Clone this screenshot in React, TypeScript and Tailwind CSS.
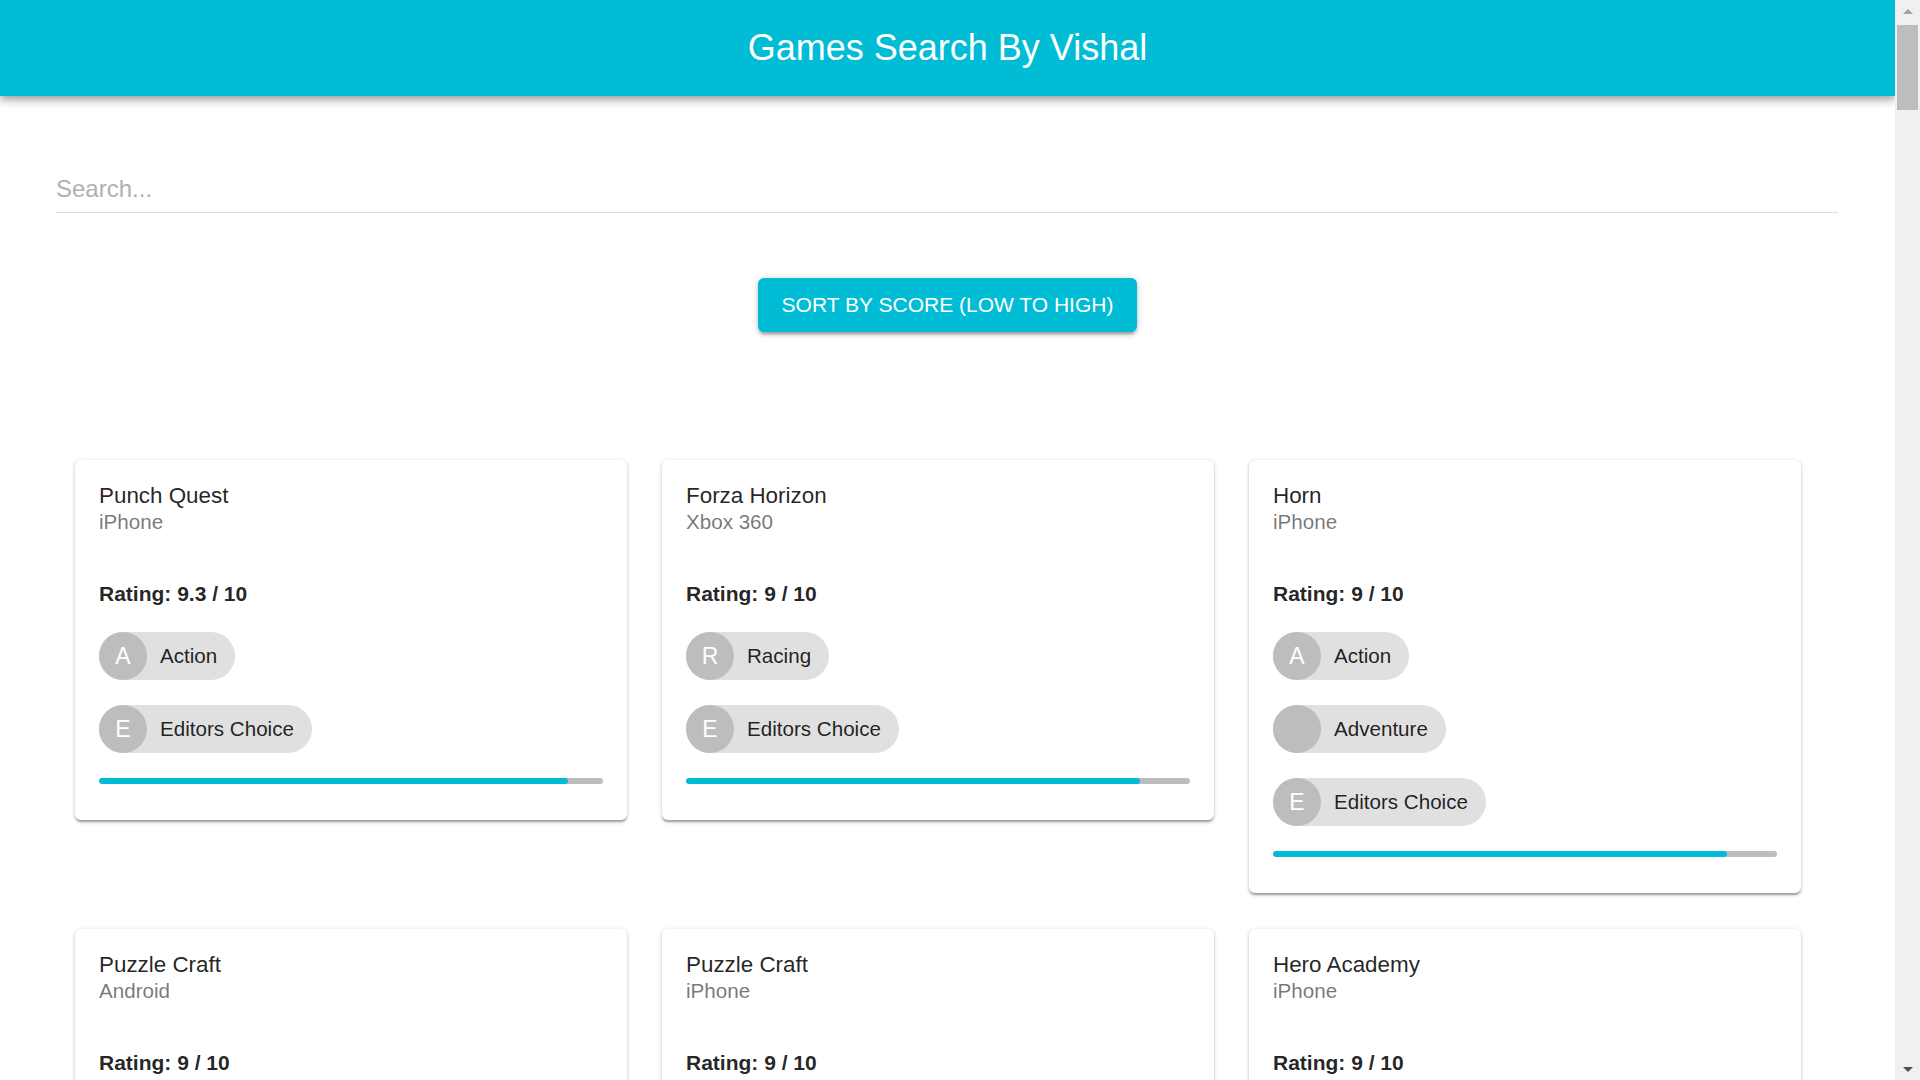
import React from "react";

type Game = {
  title: string;
  platform: string;
  score: number;
  genres: { letter: string; label: string }[];
};

const games: Game[] = [
  {
    title: "Punch Quest",
    platform: "iPhone",
    score: 9.3,
    genres: [
      { letter: "A", label: "Action" },
      { letter: "E", label: "Editors Choice" },
    ],
  },
  {
    title: "Forza Horizon",
    platform: "Xbox 360",
    score: 9,
    genres: [
      { letter: "R", label: "Racing" },
      { letter: "E", label: "Editors Choice" },
    ],
  },
  {
    title: "Horn",
    platform: "iPhone",
    score: 9,
    genres: [
      { letter: "A", label: "Action" },
      { letter: "", label: "Adventure" },
      { letter: "E", label: "Editors Choice" },
    ],
  },
  {
    title: "Puzzle Craft",
    platform: "Android",
    score: 9,
    genres: [
      { letter: "P", label: "Puzzle" },
      { letter: "E", label: "Editors Choice" },
    ],
  },
  {
    title: "Puzzle Craft",
    platform: "iPhone",
    score: 9,
    genres: [
      { letter: "P", label: "Puzzle" },
      { letter: "E", label: "Editors Choice" },
    ],
  },
  {
    title: "Hero Academy",
    platform: "iPhone",
    score: 9,
    genres: [
      { letter: "S", label: "Strategy" },
      { letter: "E", label: "Editors Choice" },
    ],
  },
];

function Chip({ letter, label, first }: { letter: string; label: string; first: boolean }) {
  return (
    <div className={first ? "mt-[26px] flex" : "mt-[25px] flex"}>
      <div className="inline-flex h-[48px] items-center rounded-full bg-[#e0e0e0]">
        <div className="flex h-[48px] w-[48px] items-center justify-center rounded-full bg-[#bdbdbd] text-[23px] text-white">
          {letter}
        </div>
        <span className="pl-[13px] pr-[18px] text-[20.6px] text-[rgba(0,0,0,0.87)]">{label}</span>
      </div>
    </div>
  );
}

function GameCard({ game }: { game: Game }) {
  const pct = (game.score / 10) * 100;
  return (
    <div className="rounded-[6px] bg-white px-[24px] pb-[36px] pt-[24px] shadow-[0_1.5px_4.5px_0_rgba(0,0,0,0.2),0_1.5px_1.5px_0_rgba(0,0,0,0.14),0_3px_1.5px_-1.5px_rgba(0,0,0,0.12)]">
      <div className="text-[22.4px] leading-[24px] text-[rgba(0,0,0,0.87)]">{game.title}</div>
      <div className="text-[20.6px] leading-[27px] text-[rgba(0,0,0,0.54)]">{game.platform}</div>
      <div className="mt-[47px] text-[21px] font-bold leading-[24px] text-[rgba(0,0,0,0.87)]">
        Rating: {game.score} / 10
      </div>
      {game.genres.map((g, i) => (
        <Chip key={i} letter={g.letter} label={g.label} first={i === 0} />
      ))}
      <div className="mt-[25px] h-[6px] w-full overflow-hidden rounded-full bg-[#bdbdbd]">
        <div className="h-full rounded-full bg-[#00bcd4]" style={{ width: `${pct}%` }} />
      </div>
    </div>
  );
}

export default function App() {
  return (
    <div className="flex h-[1080px] w-[1920px] overflow-hidden bg-white font-['Liberation_Sans',Arial,sans-serif]">
      <div className="flex h-[1080px] w-[1895px] flex-col overflow-hidden">
        <header className="relative z-10 flex h-[96px] shrink-0 items-center justify-center bg-[#00bcd4] shadow-[0_3px_6px_-1px_rgba(0,0,0,0.2),0_6px_7px_0_rgba(0,0,0,0.14),0_1.5px_15px_0_rgba(0,0,0,0.12)]">
          <h1 className="text-[36px] font-normal text-white">Games Search By Vishal</h1>
        </header>

        <div className="mt-[74px] pl-[56px] pr-[57px]">
          <input
            type="text"
            placeholder="Search..."
            className="box-border h-[43px] w-full border-b border-[#dcdcdc] bg-transparent pb-[4px] text-[24px] leading-[38px] text-[rgba(0,0,0,0.87)] outline-none placeholder:text-[#aeb0b4]"
          />
        </div>

        <div className="mt-[65px] flex justify-center">
          <button className="h-[54px] w-[379px] rounded-[6px] bg-[#00bcd4] text-[21px] uppercase text-white shadow-[0_1.5px_7.5px_0_rgba(0,0,0,0.2),0_3px_3px_0_rgba(0,0,0,0.14),0_4.5px_1.5px_-3px_rgba(0,0,0,0.12)]">
            Sort by score (low to high)
          </button>
        </div>

        <div className="mt-[128px] grid grid-cols-[552px_552px_552px] items-start gap-x-[35px] gap-y-[36px] pl-[75px]">
          {games.map((g, i) => (
            <GameCard key={i} game={g} />
          ))}
        </div>
      </div>

      <div className="relative h-[1080px] w-[25px] shrink-0 bg-[#f0f0f0]">
        <div className="absolute left-[8px] top-[9px] h-0 w-0 border-x-[5px] border-b-[5px] border-x-transparent border-b-[#a3a3a3]" />
        <div className="absolute left-[2px] top-[25px] h-[85px] w-[21px] bg-[#bdbdbd]" />
        <div className="absolute bottom-[8px] left-[8px] h-0 w-0 border-x-[5px] border-t-[5px] border-x-transparent border-t-[#505050]" />
      </div>
    </div>
  );
}
